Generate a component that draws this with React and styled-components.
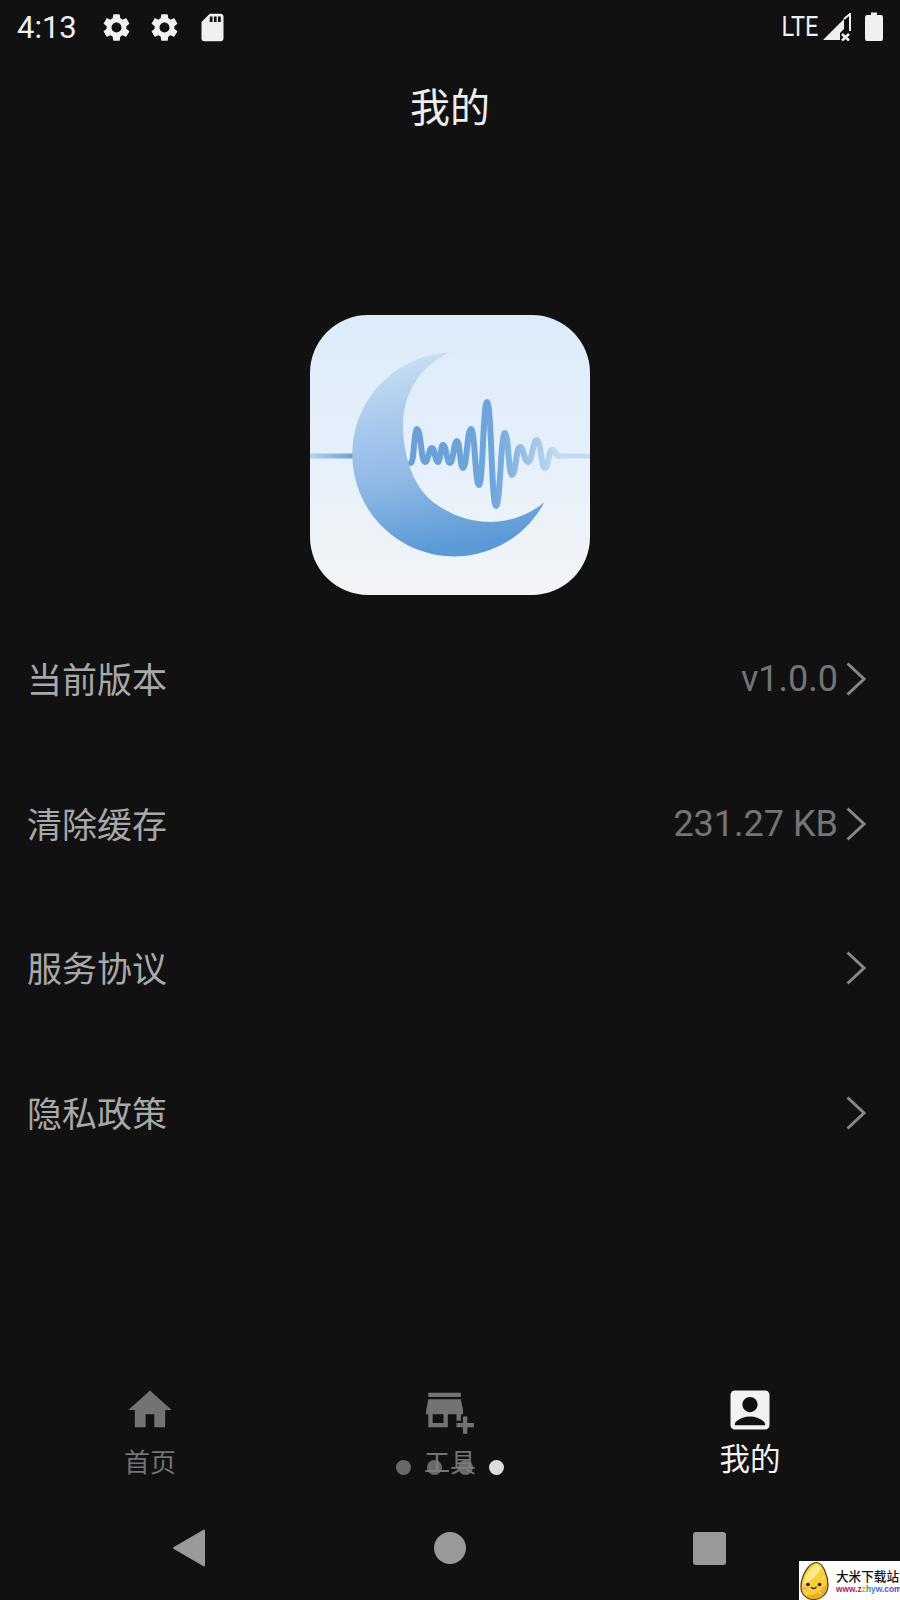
import React from "react";
import styled, { createGlobalStyle } from "styled-components";
import { MdSettings, MdSdCard, MdHome, MdAddBusiness, MdAccountBox } from "react-icons/md";

const GlobalStyle = createGlobalStyle`
  html, body { margin: 0; padding: 0; background: #111112; }
  * { box-sizing: border-box; }
`;

const Page = styled.div`
  position: relative;
  width: 900px;
  height: 1600px;
  display: flex;
  flex-direction: column;
  background: #111112;
  overflow: hidden;
  font-family: Roboto, "Noto Sans CJK SC", sans-serif;
`;

const StatusBar = styled.div`
  height: 54px;
  display: flex;
  align-items: center;
  padding: 0 17px 0 17px;
  color: #f0f0f0;
`;

const Time = styled.span`
  font-size: 31px;
  width: 83px;
`;

const StatusIcons = styled.div`
  display: flex;
  align-items: center;
  gap: 15px;
`;

const Spacer = styled.div`
  flex: 1;
`;

const Lte = styled.span`
  font-size: 27px;
  display: inline-block;
  transform: scaleX(0.87);
  transform-origin: right center;
  margin-right: 5px;
`;

const Battery = styled.svg`
  margin-left: 14px;
  margin-top: -1px;
`;

const Title = styled.h1`
  margin: 0;
  height: 106px;
  padding-bottom: 5px;
  display: flex;
  align-items: center;
  justify-content: center;
  color: #eeeeee;
  font-size: 40px;
  font-weight: 400;
`;

const LogoBox = styled.div`
  width: 280px;
  height: 280px;
  margin: 155px auto 0;
  border-radius: 58px;
  overflow: hidden;
  background: linear-gradient(180deg, #dcebfa 0%, #e6f0fb 50%, #f3f4f6 100%);
`;

const List = styled.div`
  margin-top: 12px;
  padding: 0 34px 0 27px;
`;

const Row = styled.div`
  height: 144.5px;
  display: flex;
  align-items: center;
`;

const RowLabel = styled.span`
  flex: 1;
  color: #a8a8a8;
  font-size: 35px;
  padding-bottom: 3px;
`;

const RowValue = styled.span`
  color: #747474;
  font-size: 36px;
  margin-right: 8px;
`;

const Tabs = styled.div`
  margin-top: auto;
  height: 115px;
  display: grid;
  grid-template-columns: repeat(3, 1fr);
`;

const Tab = styled.div`
  display: flex;
  flex-direction: column;
  align-items: center;
  color: ${(p) => (p.$active ? "#f2f2f2" : "#737373")};
  svg { display: block; }
`;

const TabLabel = styled.span`
  font-size: ${(p) => (p.$active ? 30.5 : 26)}px;
  line-height: 40px;
  margin-top: ${(p) => (p.$active ? 4 : 7)}px;
`;

const Dots = styled.div`
  position: absolute;
  left: 396px;
  top: 1460px;
  display: flex;
  gap: 16px;
`;

const Dot = styled.span`
  width: 15px;
  height: 15px;
  border-radius: 50%;
  background: ${(p) => (p.$active ? "#dddddd" : "rgba(128,128,128,0.8)")};
`;

const NavBar = styled.div`
  height: 101px;
  display: flex;
  align-items: center;
  justify-content: space-between;
  padding: 0 174px 3px 172px;
`;

const Back = styled.svg`
  width: 34px;
  height: 38px;
`;

const Circle = styled.span`
  width: 32px;
  height: 32px;
  border-radius: 50%;
  background: #999999;
`;

const Square = styled.span`
  width: 33px;
  height: 33px;
  border-radius: 3px;
  background: #999999;
`;

const Watermark = styled.div`
  position: absolute;
  right: 0;
  bottom: 0;
  width: 101px;
  height: 39px;
  background: #fff;
  display: flex;
  align-items: flex-start;
  padding-left: 1px;
  overflow: hidden;
`;

const EggBox = styled.div`
  flex: none;
  width: 29px;
  height: 39px;
`;

const WatermarkText = styled.div`
  flex: none;
  margin-left: 7px;
  margin-top: 7px;
`;

const WatermarkName = styled.div`
  font-family: "Noto Sans CJK SC", sans-serif;
  font-size: 12.6px;
  line-height: 15px;
  font-weight: 500;
  color: #111;
  white-space: nowrap;
`;

const WatermarkUrl = styled.div`
  font-family: "Liberation Sans", sans-serif;
  font-size: 8.4px;
  line-height: 12px;
  font-weight: 700;
  white-space: nowrap;
  color: #c2185b;
`;

const UrlPart = styled.span`
  color: ${(p) => p.$color};
`;

// wave turning points, in the 280 box of the logo
const wavePoints = [
  [101, 148], [107, 114], [115, 147], [122, 133], [128, 147], [133, 130], [140, 148], [147, 126],
  [153, 153], [161, 114], [169, 170], [177, 87], [186, 191], [195, 118], [202, 160], [210, 132],
  [218, 147], [227, 125], [235, 153], [242, 135], [249, 141],
];

const waveD = wavePoints.reduce((d, [x, y], i) => {
  if (i === 0) return `M${x} ${y}`;
  const [px, py] = wavePoints[i - 1];
  const mid = (px + x) / 2;
  return `${d} C${mid} ${py} ${mid} ${y} ${x} ${y}`;
}, "");

const LogoArt = () => (
  <svg width="280" height="280" viewBox="0 0 280 280">
    <defs>
      <linearGradient id="moon" x1="0" y1="0" x2="0.15" y2="1">
        <stop offset="0" stopColor="#cfe2f6" />
        <stop offset="0.3" stopColor="#aecdee" />
        <stop offset="0.65" stopColor="#8fb9e6" />
        <stop offset="1" stopColor="#5c9ad7" />
      </linearGradient>
      <linearGradient id="wave" gradientUnits="userSpaceOnUse" x1="100" y1="0" x2="250" y2="0">
        <stop offset="0" stopColor="#6aa0d6" />
        <stop offset="0.55" stopColor="#6ea6dc" />
        <stop offset="1" stopColor="#c4ddf3" />
      </linearGradient>
      <linearGradient id="lineLeft" x1="0" y1="0" x2="1" y2="0">
        <stop offset="0" stopColor="#b5d2ee" />
        <stop offset="1" stopColor="#6e9fcf" />
      </linearGradient>
    </defs>
    <rect x="0" y="138.5" width="44" height="5" fill="url(#lineLeft)" />
    <rect x="248" y="138.5" width="32" height="5" fill="#bfdcf3" />
    <path d={waveD} fill="none" stroke="url(#wave)" strokeWidth="6" strokeLinecap="round" />
    <path
      d="M140 37.5 A102 102 0 1 0 234.5 187 C205 212 160 215 123 187 C100 168 93 135 93 110 C93 80 110 50 140 37.5 Z"
      fill="url(#moon)"
    />
  </svg>
);

const Chevron = () => (
  <svg width="20" height="34" viewBox="0 0 20 34">
    <polyline points="1.5,1.5 18,17 1.5,32.5" fill="none" stroke="#868686" strokeWidth="3" />
  </svg>
);

const SignalIcon = () => (
  <svg width="28" height="28" viewBox="0 0 28 28">
    <path d="M0 27 L21 6 V16 L17 20 V27 Z" fill="#f0f0f0" />
    <path d="M21 6 L27 1 V18" fill="none" stroke="#f0f0f0" strokeWidth="2" />
    <path d="M19 21 L26 27.5 M26 21 L19 27.5" stroke="#f0f0f0" strokeWidth="2.6" />
  </svg>
);

const Egg = () => (
  <svg width="29" height="39" viewBox="0 0 29 39">
    <path d="M17 1.5 C23 2 28 15 28 24 C28 32.5 21.5 38.5 13.5 38.5 C6 38.5 1 33 1 26 C1 15 9 1 17 1.5 Z" fill="#f9cf3c" stroke="#4a3a10" strokeWidth="1.2" />
    <path d="M16.5 3.5 C11 5 5 15 3.5 23 C12 20 19 12 21 7 C19.5 5 18 3.5 16.5 3.5 Z" fill="#fdea8c" />
    <path d="M27 24 C27 32 21 37.5 13.5 37.5 C10 37.5 7 36.5 5 34.5 C14 35 22 31 27 22 Z" fill="#f2a91e" />
    <circle cx="8" cy="23.5" r="1.8" fill="#222" />
    <circle cx="19.5" cy="23.5" r="1.8" fill="#222" />
    <path d="M11 26 Q13.7 29.2 16.5 26" fill="none" stroke="#222" strokeWidth="1.2" />
    <ellipse cx="4.8" cy="27.5" rx="2" ry="1.2" fill="#f3a08c" />
    <ellipse cx="23" cy="27.5" rx="2" ry="1.2" fill="#f3a08c" />
    <circle cx="23.5" cy="17" r="0.9" fill="#fff6c8" />
    <circle cx="20" cy="32" r="0.9" fill="#fff6c8" />
  </svg>
);

const rows = [
  { label: "当前版本", value: "v1.0.0" },
  { label: "清除缓存", value: "231.27 KB" },
  { label: "服务协议" },
  { label: "隐私政策" },
];

export default function App() {
  return (
    <Page>
      <GlobalStyle />
      <StatusBar>
        <Time>4:13</Time>
        <StatusIcons>
          <MdSettings size={33} />
          <MdSettings size={33} />
          <MdSdCard size={33} />
        </StatusIcons>
        <Spacer />
        <Lte>LTE</Lte>
        <SignalIcon />
        <Battery width="18" height="29" viewBox="0 0 18 29">
          <path d="M6 0.5 H12 V3 H16 Q18 3 18 5 V27 Q18 29 16 29 H2 Q0 29 0 27 V5 Q0 3 2 3 H6 Z" fill="#f0f0f0" />
        </Battery>
      </StatusBar>
      <Title>我的</Title>
      <LogoBox>
        <LogoArt />
      </LogoBox>
      <List>
        {rows.map((row) => (
          <Row key={row.label}>
            <RowLabel>{row.label}</RowLabel>
            {row.value && <RowValue>{row.value}</RowValue>}
            <Chevron />
          </Row>
        ))}
      </List>
      <Tabs>
        <Tab>
          <MdHome size={52} />
          <TabLabel>首页</TabLabel>
        </Tab>
        <Tab>
          <MdAddBusiness size={52} />
          <TabLabel>工具</TabLabel>
        </Tab>
        <Tab $active>
          <MdAccountBox size={52} />
          <TabLabel $active>我的</TabLabel>
        </Tab>
      </Tabs>
      <Dots>
        <Dot />
        <Dot />
        <Dot />
        <Dot $active />
      </Dots>
      <NavBar>
        <Back viewBox="0 0 34 38">
          <path d="M32 1.5 V36.5 L2 19 Z" fill="#999999" stroke="#999999" strokeWidth="2" strokeLinejoin="round" />
        </Back>
        <Circle />
        <Square />
      </NavBar>
      <Watermark>
        <EggBox>
          <Egg />
        </EggBox>
        <WatermarkText>
          <WatermarkName>大米下载站</WatermarkName>
          <WatermarkUrl>
            www.z<UrlPart $color="#e6a817">z</UrlPart>
            <UrlPart $color="#2e9e4f">h</UrlPart>
            <UrlPart $color="#2a7de1">y</UrlPart>
            <UrlPart $color="#3f6fd0">w</UrlPart>
            <UrlPart $color="#6a3fc4">.com</UrlPart>
          </WatermarkUrl>
        </WatermarkText>
      </Watermark>
    </Page>
  );
}
